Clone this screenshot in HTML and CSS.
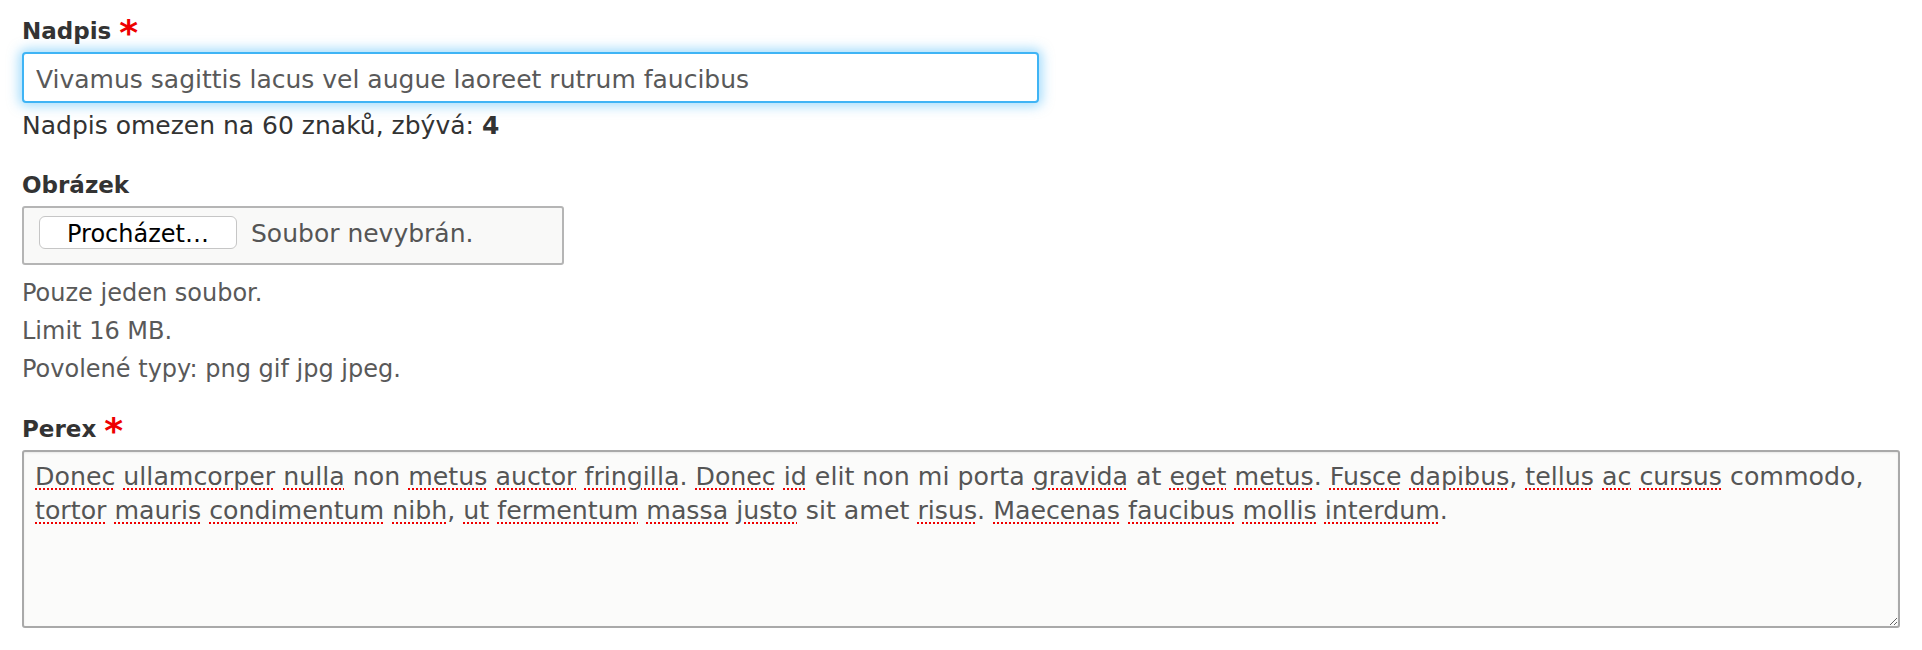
FILE: index.html
```html
<!DOCTYPE html>
<html lang="cs">
<head>
    <meta charset="UTF-8">
    <meta name="viewport" content="width=device-width, initial-scale=1.0">
    <title>Přidat článek</title>
    <link rel="stylesheet" href="styles.css">
</head>
<body>
    <form class="node-form">
        <div class="form-item">
            <label class="form-label" for="edit-title">Nadpis <span class="form-required">*</span></label>
            <input class="form-text" type="text" id="edit-title" name="title" value="Vivamus sagittis lacus vel augue laoreet rutrum faucibus">
            <div class="counter">Nadpis omezen na 60 znaků, zbývá: <strong>4</strong></div>
        </div>

        <div class="form-item form-item-file">
            <label class="form-label" for="edit-image">Obrázek</label>
            <div class="form-file" id="edit-image">
                <button type="button" class="file-button">Procházet…</button>
                <span class="file-status">Soubor nevybrán.</span>
            </div>
            <div class="description">
                <p>Pouze jeden soubor.</p>
                <p>Limit 16 MB.</p>
                <p>Povolené typy: png gif jpg jpeg.</p>
            </div>
        </div>

        <div class="form-item">
            <label class="form-label" for="edit-perex">Perex <span class="form-required">*</span></label>
            <!-- slova podtržená kontrolou pravopisu -->
            <div class="form-textarea" id="edit-perex"><span class="spell">Donec</span> <span class="spell">ullamcorper</span> <span class="spell">nulla</span> non <span class="spell">metus</span> <span class="spell">auctor</span> <span class="spell">fringilla</span>. <span class="spell">Donec</span> <span class="spell">id</span> elit non mi porta <span class="spell">gravida</span> at <span class="spell">eget</span> <span class="spell">metus</span>. <span class="spell">Fusce</span> <span class="spell">dapibus</span>, <span class="spell">tellus</span> <span class="spell">ac</span> <span class="spell">cursus</span> commodo, <span class="spell">tortor</span> <span class="spell">mauris</span> <span class="spell">condimentum</span> <span class="spell">nibh</span>, <span class="spell">ut</span> <span class="spell">fermentum</span> <span class="spell">massa</span> <span class="spell">justo</span> sit amet <span class="spell">risus</span>. <span class="spell">Maecenas</span> <span class="spell">faucibus</span> <span class="spell">mollis</span> <span class="spell">interdum</span>.</div>
        </div>
    </form>
</body>
</html>
```

FILE: styles.css
```css
body {
    margin: 0;
    font-family: "DejaVu Sans", "Liberation Sans", sans-serif;
    color: #333;
    background-color: #fff;
}

.node-form {
    padding: 17px 22px 0;
}

.form-item {
    margin-bottom: 30px;
}

.form-item-file {
    margin-bottom: 27px;
}

.form-label {
    display: block;
    font-size: 23px;
    font-weight: bold;
    line-height: 28px;
    margin-bottom: 7px;
    color: #333;
}

.form-required {
    color: #e00;
    font-size: 36px;
    line-height: 0;
    vertical-align: -6px;
}

.form-text {
    display: block;
    width: 1017px;
    height: 51px;
    box-sizing: border-box;
    padding: 4px 12px 0;
    border: 2px solid #3fb4f5;
    border-radius: 4px;
    box-shadow: 0 0 12px 3px rgba(70, 185, 250, 0.5);
    font-family: "DejaVu Sans", sans-serif;
    font-size: 25px;
    color: #595959;
    outline: none;
}

.counter {
    margin-top: 8px;
    font-size: 25px;
    line-height: 30px;
    color: #333;
}

.form-file {
    display: flex;
    align-items: baseline;
    gap: 14px;
    width: 542px;
    height: 59px;
    box-sizing: border-box;
    padding: 8px 0 0 15px;
    border: 2px solid #b5b5b5;
    border-radius: 3px;
    background-color: #f9f9f8;
}

.file-button {
    width: 198px;
    height: 33px;
    box-sizing: border-box;
    padding: 3px 0 0;
    border: 1px solid #c6c6c6;
    border-radius: 6px;
    background-color: #fff;
    font-family: "DejaVu Sans", sans-serif;
    font-size: 24px;
    color: #000;
}

.file-status {
    font-size: 25px;
    color: #555;
}

.description {
    margin-top: 9px;
    font-size: 24px;
    line-height: 38px;
    color: #595959;
}

.description p {
    margin: 0;
}

.form-textarea {
    height: 178px;
    box-sizing: border-box;
    margin-top: 6px;
    padding: 8px 11px;
    border: 2px solid #a9a9a9;
    border-radius: 3px;
    background-color: #fbfbfa;
    box-shadow: inset 0 1px 2px rgba(0, 0, 0, 0.08);
    font-size: 25.25px;
    line-height: 34px;
    color: #555;
    overflow: auto;
    resize: vertical;
}

.spell {
    text-decoration: underline dotted #e00;
    text-decoration-thickness: 2px;
    text-underline-offset: 3px;
}
```
